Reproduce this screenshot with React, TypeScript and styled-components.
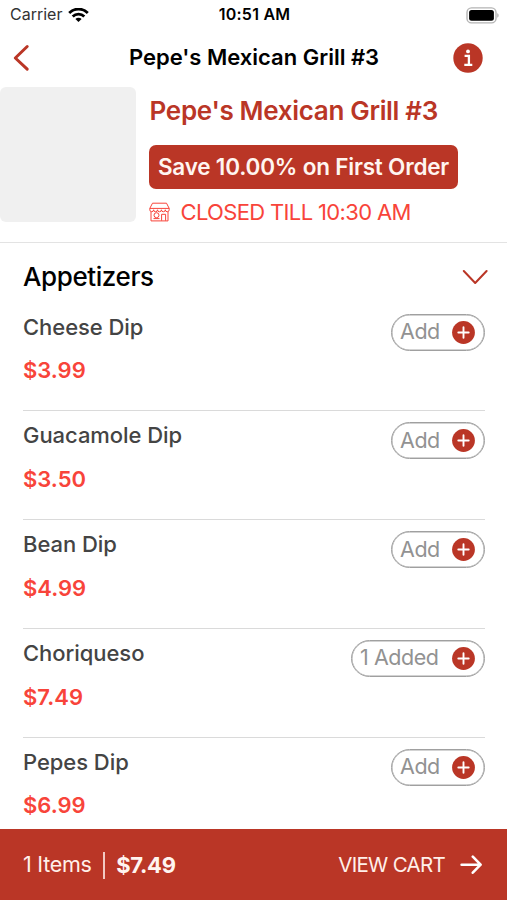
import React from "react";
import styled, { createGlobalStyle } from "styled-components";

const brand = "#ba3626";
const accent = "#f8443a";

const GlobalStyle = createGlobalStyle`
  * { box-sizing: border-box; }
  body { margin: 0; background: #fff; font-family: Inter, "Liberation Sans", sans-serif; }
  button { font: inherit; background: none; border: 0; padding: 0; }
`;

const Screen = styled.main`
  width: 507px;
  height: 900px;
  display: flex;
  flex-direction: column;
  overflow: hidden;
  background: #fff;
`;

const Label = styled.span<{ $size: number; $weight?: number; $color?: string; $track?: number }>`
  font-size: ${(p) => p.$size}px;
  font-weight: ${(p) => p.$weight ?? 400};
  color: ${(p) => p.$color ?? "#000"};
  letter-spacing: ${(p) => p.$track ?? 0}px;
  white-space: nowrap;
  line-height: 1.2;
`;

const StatusBar = styled.div`
  height: 31px;
  flex: none;
  display: grid;
  grid-template-columns: 1fr auto 1fr;
  align-items: center;
  padding: 0 8px 1px 10px;
`;

const Carrier = styled.div`
  display: flex;
  align-items: center;
  gap: 6px;
`;

const Battery = styled.div`
  justify-self: end;
  display: flex;
`;

const NavBar = styled.header`
  height: 56px;
  flex: none;
  display: grid;
  grid-template-columns: 43px 1fr 31px;
  align-items: center;
  justify-items: center;
  padding: 0 23px 3px 12px;
`;

const IconButton = styled.button`
  display: flex;
  justify-self: start;
`;

const Summary = styled.section`
  height: 156px;
  flex: none;
  display: flex;
  gap: 13px;
  border-bottom: 1.5px solid #e3e3e3;
`;

const Thumbnail = styled.div`
  width: 136px;
  height: 135px;
  border-radius: 6px;
  background: #f0f0f0;
`;

const Details = styled.div`
  display: flex;
  flex-direction: column;
  align-items: flex-start;
  padding-top: 8px;
`;

const RestaurantName = styled(Label)`
  padding-left: 0.6px;
`;

const Promo = styled.div`
  width: 309px;
  height: 44px;
  margin-top: 19px;
  padding-bottom: 1px;
  border-radius: 7px;
  background: ${brand};
  display: flex;
  align-items: center;
  justify-content: center;
`;

const Hours = styled.div`
  display: flex;
  align-items: center;
  gap: 10.5px;
  margin-top: 10px;
`;

const Menu = styled.section`
  flex: 1;
  min-height: 0;
  overflow: hidden;
  padding: 0 22px 0 23px;
`;

const CategoryHeader = styled.div`
  height: 59.6px;
  display: flex;
  align-items: center;
  justify-content: space-between;
  padding-top: 8px;
  margin-right: -3px;
`;

const Item = styled.article`
  height: 108.75px;
  display: flex;
  align-items: flex-start;
  justify-content: space-between;
  border-bottom: 1px solid #dadada;
  padding-top: 11px;
`;

const ItemInfo = styled.div`
  display: flex;
  flex-direction: column;
  gap: 17.5px;
`;

const AddButton = styled.button<{ $wide?: boolean }>`
  width: ${(p) => (p.$wide ? 134 : 94)}px;
  height: 37px;
  border: 1px solid #a0a0a0;
  box-shadow: inset 0 0 0 0.5px #a8a8a8;
  border-radius: 19px;
  display: flex;
  align-items: center;
  justify-content: space-between;
  padding: 0 9px 0 8px;
`;

const CartBar = styled.footer`
  height: 71px;
  flex: none;
  background: ${brand};
  display: flex;
  align-items: center;
  justify-content: space-between;
  padding: 1px 24px 0 23px;
`;

const CartGroup = styled.div<{ $gap: number }>`
  display: flex;
  align-items: center;
  gap: ${(p) => p.$gap}px;
`;

const Separator = styled.div`
  width: 1.5px;
  height: 27px;
  background: #f2c9c2;
`;

const items = [
  { name: "Cheese Dip", price: "$3.99", added: 0 },
  { name: "Guacamole Dip", price: "$3.50", added: 0 },
  { name: "Bean Dip", price: "$4.99", added: 0 },
  { name: "Choriqueso", price: "$7.49", added: 1 },
  { name: "Pepes Dip", price: "$6.99", added: 0 },
];

const WifiIcon = () => (
  <svg width="21" height="15" viewBox="0 0 21 15" fill="none" stroke="#000" strokeWidth="2.8">
    <path d="M1.2 4.9a13.2 13.2 0 0 1 18.6 0" />
    <path d="M4.7 8.5a8.2 8.2 0 0 1 11.6 0" />
    <path d="M10.5 14.1 7.4 11a4.4 4.4 0 0 1 6.2 0z" fill="#000" stroke="none" />
  </svg>
);

const BatteryIcon = () => (
  <svg width="34" height="17" viewBox="0 0 34 17">
    <rect x="2" y="0.9" width="29" height="15" rx="4.5" fill="#fff" stroke="#b4b4b4" strokeWidth="1.4" />
    <rect x="4.1" y="3" width="24.8" height="10.8" rx="2.5" fill="#000" />
    <path d="M32.3 6.3c1.7.6 1.7 3.8 0 4.4z" fill="#aaa" />
  </svg>
);

const BackIcon = () => (
  <svg width="18" height="28" viewBox="0 0 18 28" fill="none" stroke={brand} strokeWidth="3" strokeLinecap="round" strokeLinejoin="round">
    <path d="M15.2 2.5 3.3 14 15.2 25.2" />
  </svg>
);

const InfoIcon = () => (
  <svg width="30" height="30" viewBox="0 0 30 30">
    <circle cx="15" cy="15" r="14.7" fill={brand} />
    <circle cx="15" cy="8.4" r="1.9" fill="#fff" />
    <path d="M11.6 12.9h4.3v8.6M11.3 21.9h8" fill="none" stroke="#fff" strokeWidth="2.3" />
  </svg>
);

const StoreIcon = () => (
  <svg width="21" height="20" viewBox="0 0 21 20" fill="none" stroke={accent} strokeWidth="1">
    <path d="M3.5 1.2h14l2.7 5.2H.8zM.8 6.4v1.4a1.9 1.9 0 0 0 3.8 0 1.9 1.9 0 0 0 3.9 0 1.9 1.9 0 0 0 3.9 0 1.9 1.9 0 0 0 3.9 0 1.9 1.9 0 0 0 3.9 0V6.4M2 9.7v9.2h17V9.7M12.6 18.7v-6.4h4v6.4M4.5 16.6h6" />
    <circle cx="7.5" cy="13.2" r="2.5" />
  </svg>
);

const ChevronIcon = () => (
  <svg width="26" height="16" viewBox="0 0 26 16" fill="none" stroke={brand} strokeWidth="2" strokeLinecap="round" strokeLinejoin="round">
    <path d="M1.8 2 13.2 14 24.6 2" />
  </svg>
);

const PlusIcon = () => (
  <svg width="23" height="23" viewBox="0 0 23 23">
    <circle cx="11.5" cy="11.5" r="11.4" fill={brand} />
    <path d="M6.3 11.5h10.4M11.5 6.3v10.4" stroke="#fff" strokeWidth="1.9" strokeLinecap="round" />
  </svg>
);

const ArrowIcon = () => (
  <svg width="23" height="20" viewBox="0 0 23 20" fill="none" stroke="#fff" strokeWidth="2.6" strokeLinecap="round" strokeLinejoin="round">
    <path d="M1.6 9.7h19M12.8 1.7l7.8 8-7.8 8" />
  </svg>
);

export default function App() {
  return (
    <Screen>
      <GlobalStyle />
      <StatusBar>
        <Carrier>
          <Label $size={16} $color="#333">Carrier</Label>
          <WifiIcon />
        </Carrier>
        <Label $size={16} $weight={600} $track={0.25}>10:51 AM</Label>
        <Battery><BatteryIcon /></Battery>
      </StatusBar>
      <NavBar>
        <IconButton aria-label="Back"><BackIcon /></IconButton>
        <Label $size={22} $weight={600}>Pepe's Mexican Grill #3</Label>
        <IconButton aria-label="Restaurant info"><InfoIcon /></IconButton>
      </NavBar>
      <Summary>
        <Thumbnail />
        <Details>
          <RestaurantName $size={26} $weight={600} $color={brand} $track={-0.32}>Pepe's Mexican Grill #3</RestaurantName>
          <Promo>
            <Label $size={22.5} $weight={600} $color="#fff5f0" $track={-0.2}>Save 10.00% on First Order</Label>
          </Promo>
          <Hours>
            <StoreIcon />
            <Label $size={22} $color={accent} $track={-0.65}>CLOSED TILL 10:30 AM</Label>
          </Hours>
        </Details>
      </Summary>
      <Menu>
        <CategoryHeader>
          <Label $size={26} $weight={500} $track={-0.4}>Appetizers</Label>
          <ChevronIcon />
        </CategoryHeader>
        {items.map((item) => (
          <Item key={item.name}>
            <ItemInfo>
              <Label $size={22} $weight={500} $color="#444" $track={-0.05}>{item.name}</Label>
              <Label $size={22} $weight={600} $color={accent}>{item.price}</Label>
            </ItemInfo>
            <AddButton $wide={item.added > 0}>
              <Label $size={21.5} $color="#929292" $track={-0.45}>{item.added ? `${item.added} Added` : "Add"}</Label>
              <PlusIcon />
            </AddButton>
          </Item>
        ))}
      </Menu>
      <CartBar>
        <CartGroup $gap={11.5}>
          <Label $size={21.5} $color="#fff0ea" $track={-0.25}>1 Items</Label>
          <Separator />
          <Label $size={22} $weight={700} $color="#fff5f0" $track={-0.3}>$7.49</Label>
        </CartGroup>
        <CartGroup $gap={15}>
          <Label $size={20.5} $color="#fff0ea" $track={-0.7}>VIEW CART</Label>
          <ArrowIcon />
        </CartGroup>
      </CartBar>
    </Screen>
  );
}
